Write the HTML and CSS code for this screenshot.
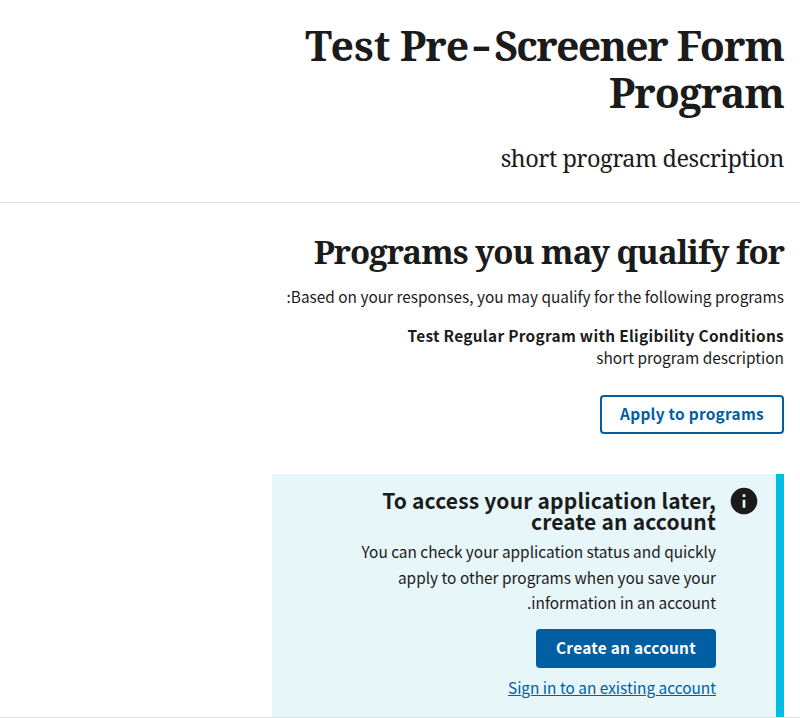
FILE: index.html
```html
<!DOCTYPE html>
<html lang="en" dir="rtl">
<head>
<meta charset="utf-8">
<title>Programs you may qualify for</title>
<link rel="stylesheet" href="styles.css">
</head>
<body>
<header class="hero">
<h1 class="title"><span class="loose">Test</span> Pre<span class="hyphen">-</span><span class="tight">Screener</span> Form Program</h1>
<p class="lead">short program description</p>
</header>
<main class="content">
<h2 class="heading">Programs you may qualify for</h2>
<p class="intro">Based on your responses, you may qualify for the following programs:</p>
<h3 class="program">Test Regular Program with Eligibility Conditions</h3>
<p class="description">short program description</p>
<a class="button outline">Apply to programs</a>
<section class="alert">
<svg class="info" viewBox="0 0 24 24"><path fill="currentColor" d="M12 2C6.48 2 2 6.48 2 12s4.48 10 10 10 10-4.48 10-10S17.52 2 12 2zm1 15h-2v-6h2v6zm0-8h-2V7h2v2z"/></svg>
<div class="alert-body">
<h3 class="alert-title">To access your application later, create an account</h3>
<p class="alert-text">You can check your application status and quickly apply to other programs when you save your information in an account.</p>
<a class="button filled">Create an account</a>
<a class="link">Sign in to an existing account</a>
</div>
</section>
</main>
</body>
</html>
```
FILE: styles.css
```css
* { box-sizing: border-box; }
body { margin: 0; height: 718px; overflow: hidden; background: #fff; color: #1b1b1b; font: 15.4px/22px "Noto Sans CJK SC", "Noto Sans", sans-serif; border-bottom: 1px solid #dfe1e2; }
h1, h2, h3, p { margin: 0; }
.hero { height: 203px; padding: 22px 16px 0; border-bottom: 1px solid #dfe1e2; font-family: "Noto Serif", "Liberation Serif", serif; }
.title { max-width: 540px; font-size: 41px; line-height: 47px; letter-spacing: -0.9px; }
.loose { letter-spacing: 0; }
.tight { letter-spacing: -1.65px; }
.hyphen { display: inline-block; margin: 0 7px; transform: translateY(-1px) scaleX(1.45); }
.lead { margin-top: 28px; font-size: 23.5px; line-height: 28px; letter-spacing: -0.47px; }
.content { padding: 31px 16px 0; }
.heading { font: bold 33px/36px "Noto Serif", "Liberation Serif", serif; letter-spacing: -1px; }
.intro { margin-top: 15px; }
.program { margin-top: 17px; font-size: 15.4px; line-height: 22px; letter-spacing: 0.3px; }
.button { display: flex; align-items: center; justify-content: center; height: 39px; padding-bottom: 4px; border-radius: 4px; font-weight: 700; letter-spacing: 0.27px; white-space: nowrap; }
.outline { width: 184px; margin-top: 27px; border: 2px solid #005ea2; color: #005ea2; }
.alert { display: flex; width: 512px; height: 243px; margin-top: 40px; padding: 11px 16px 0 0; border-right: 8px solid #00bde3; background: #e7f6f8; }
.info { flex: none; width: 32px; height: 32px; }
.alert-body { width: 364px; margin-right: 12px; padding-top: 5px; }
.alert-title { font-size: 21px; line-height: 21px; letter-spacing: 0.18px; }
.alert-text { margin-top: 7px; line-height: 25.5px; }
.filled { width: 180px; margin-top: 13.5px; background: #005ea2; color: #fff; }
.link { display: block; margin-top: 8px; color: #005ea2; text-decoration: underline; }
```
